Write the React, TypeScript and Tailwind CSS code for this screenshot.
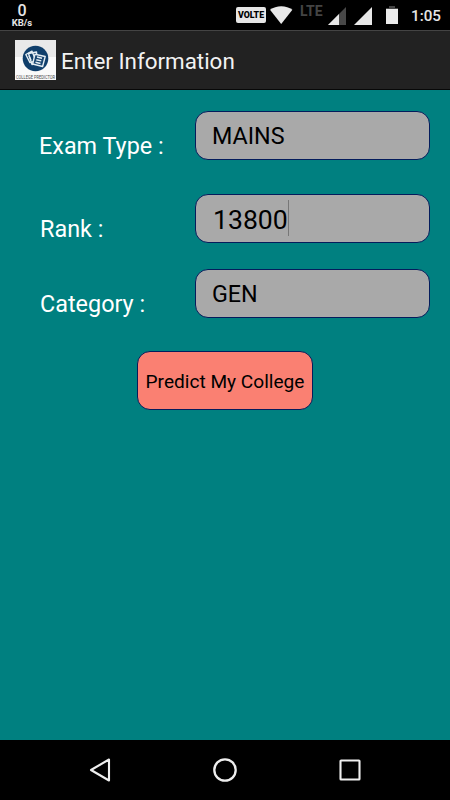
import React from "react";

function StatusBar() {
  return (
    <header className="flex h-[30px] w-full shrink-0 bg-black text-[#e6e6e6]">
      <div className="ml-[10px] flex w-6 flex-col items-center pt-[3px]">
        <span className="text-[16px] leading-[15px] font-medium">0</span>
        <span className="text-[9.5px] leading-[9px] font-bold whitespace-nowrap">KB/s</span>
      </div>
      <div className="ml-[202px] mt-[7px] flex h-4 w-[30px] items-center justify-center rounded-[2px] bg-[#e6e6e6] pt-px text-[8.8px] font-black text-black">
        VOLTE
      </div>
      <svg className="ml-[4px] mt-[6px] h-[18px] w-[23px] shrink-0" viewBox="0 0 23 18" fill="#e8e8e8">
        <path d="M0 3.7C6.2-1 16.4-1 22.4 3.7L11.2 18Z" />
      </svg>
      <span className="ml-[7px] mt-[3px] w-[25px] text-[14px] leading-[16px] font-bold text-[#444]">LTE</span>
      <svg className="ml-[3px] mt-[7px] h-[18px] w-[18px] shrink-0" viewBox="0 0 18 18">
        <path d="M0 18L18 0V18Z" fill="#484848" />
        <path d="M0 18L11 7V18Z" fill="#e8e8e8" />
      </svg>
      <svg className="ml-[8px] mt-[7px] h-[18px] w-[18px] shrink-0" viewBox="0 0 18 18">
        <path d="M0 18L18 0V18Z" fill="#e8e8e8" />
      </svg>
      <svg className="ml-[14px] mt-[6px] h-[18px] w-3 shrink-0" viewBox="0 0 12 18">
        <path d="M3 0H9V2H12V4H0V2H3Z" fill="#444" />
        <path d="M0 3H12V18H0Z" fill="#ebebeb" />
      </svg>
      <span className="ml-[13px] mt-[6px] text-[15.2px] leading-[20px] font-medium">1:05</span>
    </header>
  );
}

function AppLogo() {
  return (
    <svg className="ml-[15px] h-10 w-[41px] shrink-0 overflow-visible" viewBox="0 0 41 40">
      <path d="M0 0H41V40H0Z" fill="#fafafa" />
      <path d="M0 0H41V17H0Z" fill="#e9e9e9" />
      <circle cx="20.5" cy="18.5" r="12.8" fill="#103f6b" />
      <g fill="none" stroke="#e4edf3" strokeWidth="1.4" strokeLinejoin="round">
        <path d="M10.8 14.5L17 11.2L21 21L15 22.6Z" />
        <path d="M13.5 13.5L21.5 12L22.5 22.5L17 24.5Z" />
        <path d="M20 14.2L30.2 16.5L27.6 26.5L17.6 24Z" fill="#174571" />
        <path d="M22 17L27 18.2M21.3 19.7L26.3 20.9M20.5 22.3L25.5 23.5M14 16L16 20" />
      </g>
      <text x="1" y="38.9" textLength="39" lengthAdjust="spacingAndGlyphs" fontFamily="Roboto, sans-serif" fontSize="4.8" fill="#4a4a4a">COLLEGE PREDICTOR</text>
    </svg>
  );
}

function Field({ label, value, className, labelClass, valueClass, focused = false }: {
  label: string;
  value: string;
  className: string;
  labelClass: string;
  valueClass: string;
  focused?: boolean;
}) {
  return (
    <div className={"flex h-[49px] " + className}>
      <label className={"w-[195px] shrink-0 pt-[21px] text-[23.4px] leading-[28px] whitespace-nowrap text-white " + labelClass}>{label}</label>
      <div className={"flex h-[49px] w-[235px] items-center rounded-[13px] border border-[#041c5c] bg-[#a9a9a9] text-black " + valueClass}>
        <span>{value}</span>
        {focused && <i className="-mt-1 h-9 w-px bg-[#777]" />}
      </div>
    </div>
  );
}

export default function App() {
  return (
    <div className="flex h-[800px] w-[450px] flex-col overflow-hidden bg-[#008080] font-[Roboto,sans-serif]">
      <StatusBar />
      <div className="flex h-[60px] shrink-0 items-center border-t border-b border-t-[#444] border-b-[#080808] bg-[#222]">
        <AppLogo />
        <h1 className="ml-[5px] pt-px text-[22.4px] leading-[30px] text-[#f2f2f2]">Enter Information</h1>
      </div>
      <main className="flex flex-1 flex-col">
        <Field label="Exam Type :" value="MAINS" className="mt-[21px]" labelClass="pl-[39px]" valueClass="pl-4 pt-[2px] text-[23.3px]" />
        <Field label="Rank :" value="13800" className="mt-[34px]" labelClass="pl-[40px]" valueClass="pl-[17px] pt-[3px] text-[26.6px]" focused />
        <Field label="Category :" value="GEN" className="mt-[26px]" labelClass="pl-[40px]" valueClass="pl-4 pt-[2px] text-[23.3px]" />
        <button className="mt-[33px] ml-[137px] h-[59px] w-[176px] rounded-[13px] border border-[#041c5c] bg-[#fa8072] pt-[3px] text-[19.1px] whitespace-nowrap text-black">
          Predict My College
        </button>
      </main>
      <nav className="flex h-[60px] shrink-0 items-center bg-black">
        <svg className="ml-[89px] h-6 w-[22px]" viewBox="0 0 22 24" fill="none" stroke="#eee" strokeWidth="2.1" strokeLinejoin="round">
          <path d="M2 12L20 1.5V22.5Z" />
        </svg>
        <svg className="ml-[102px] h-6 w-6" viewBox="0 0 24 24" fill="none" stroke="#eee" strokeWidth="2.3">
          <circle cx="12" cy="12" r="10.7" />
        </svg>
        <svg className="ml-[102px] h-[22px] w-[22px]" viewBox="0 0 22 22" fill="none" stroke="#eee" strokeWidth="2.1">
          <rect x="1.5" y="1.5" width="19" height="19" rx="0.6" />
        </svg>
      </nav>
    </div>
  );
}
